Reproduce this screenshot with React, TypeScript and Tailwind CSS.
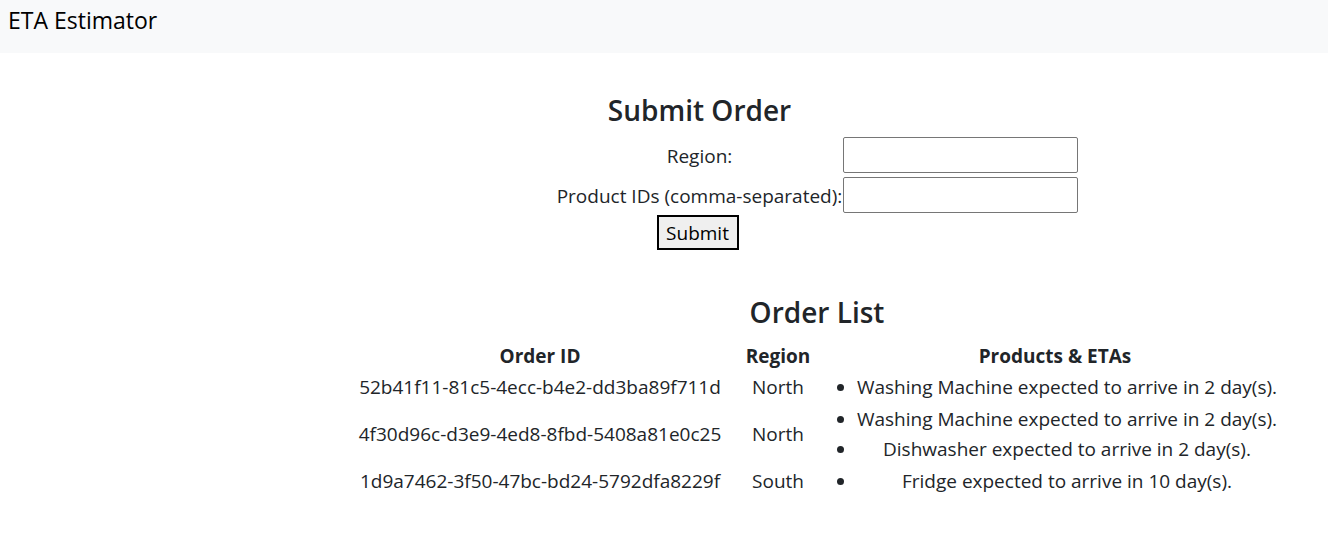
import React from "react";

const orders = [
  { id: "52b41f11-81c5-4ecc-b4e2-dd3ba89f711d", region: "North", items: ["Washing Machine expected to arrive in 2 day(s)."] },
  {
    id: "4f30d96c-d3e9-4ed8-8fbd-5408a81e0c25",
    region: "North",
    items: ["Washing Machine expected to arrive in 2 day(s).", "Dishwasher expected to arrive in 2 day(s)."],
  },
  { id: "1d9a7462-3f50-47bc-bd24-5792dfa8229f", region: "South", items: ["Fridge expected to arrive in 10 day(s)."] },
];

export default function App() {
  return (
    <div className="min-h-[535px] bg-white text-[#212529] font-['Open_Sans',sans-serif] text-[19px]">
      <nav className="h-[53px] bg-[#f8f9fa] pl-[8px] pt-[4px]">
        <span className="text-[23px] leading-[32px] text-black">ETA Estimator</span>
      </nav>
      <div className="flex">
        <div className="w-[306px] shrink-0" />
        <main className="flex-1 flex flex-col items-center">
          <div className="grid grid-cols-[287px_235px] mt-[37px]">
            <h2 className="text-[28px] font-semibold leading-[40px] h-[40px] text-center mb-[7px] whitespace-nowrap">Submit Order</h2>
            <div />
            <label className="h-[36px] flex items-center justify-center pt-[3px]">Region:</label>
            <input className="h-[36px] border border-[#767676] rounded-[2px] bg-white" />
            <label className="h-[36px] mt-[4px] flex items-center justify-center pt-[3px] whitespace-nowrap">
              Product IDs (comma-separated):
            </label>
            <input className="h-[36px] mt-[4px] border border-[#767676] rounded-[2px] bg-white" />
            <div className="mt-[2px] mr-[4px] flex justify-center">
              <button className="h-[35px] w-[82px] border-2 border-black bg-[#efefef] text-black text-[19px] leading-[28px]">Submit</button>
            </div>
            <div />
          </div>
          <h2 className="text-[28px] font-semibold leading-[40px] mt-[42px] mb-[8px]">Order List</h2>
          <table className="table-fixed border-separate border-spacing-[2px] w-[945px]">
            <colgroup>
              <col className="w-[387px]" />
              <col className="w-[85px]" />
              <col className="w-[465px]" />
            </colgroup>
            <thead>
              <tr>
                <th className="font-bold leading-[28px] px-[10px] text-center">Order ID</th>
                <th className="font-bold leading-[28px] px-[10px] text-center">Region</th>
                <th className="font-bold leading-[28px] px-[10px] text-center whitespace-nowrap">Products &amp; ETAs</th>
              </tr>
            </thead>
            <tbody>
              {orders.map((o) => (
                <tr key={o.id}>
                  <td className="px-[10px] text-center leading-[30px] whitespace-nowrap">{o.id}</td>
                  <td className="px-[10px] text-center leading-[30px]">{o.region}</td>
                  <td className="px-[10px]">
                    <ul className="list-disc pl-[24px]">
                      {o.items.map((it, i) => (
                        <li key={i} className="text-center leading-[30px] whitespace-nowrap">
                          {it}
                        </li>
                      ))}
                    </ul>
                  </td>
                </tr>
              ))}
            </tbody>
          </table>
        </main>
      </div>
    </div>
  );
}
